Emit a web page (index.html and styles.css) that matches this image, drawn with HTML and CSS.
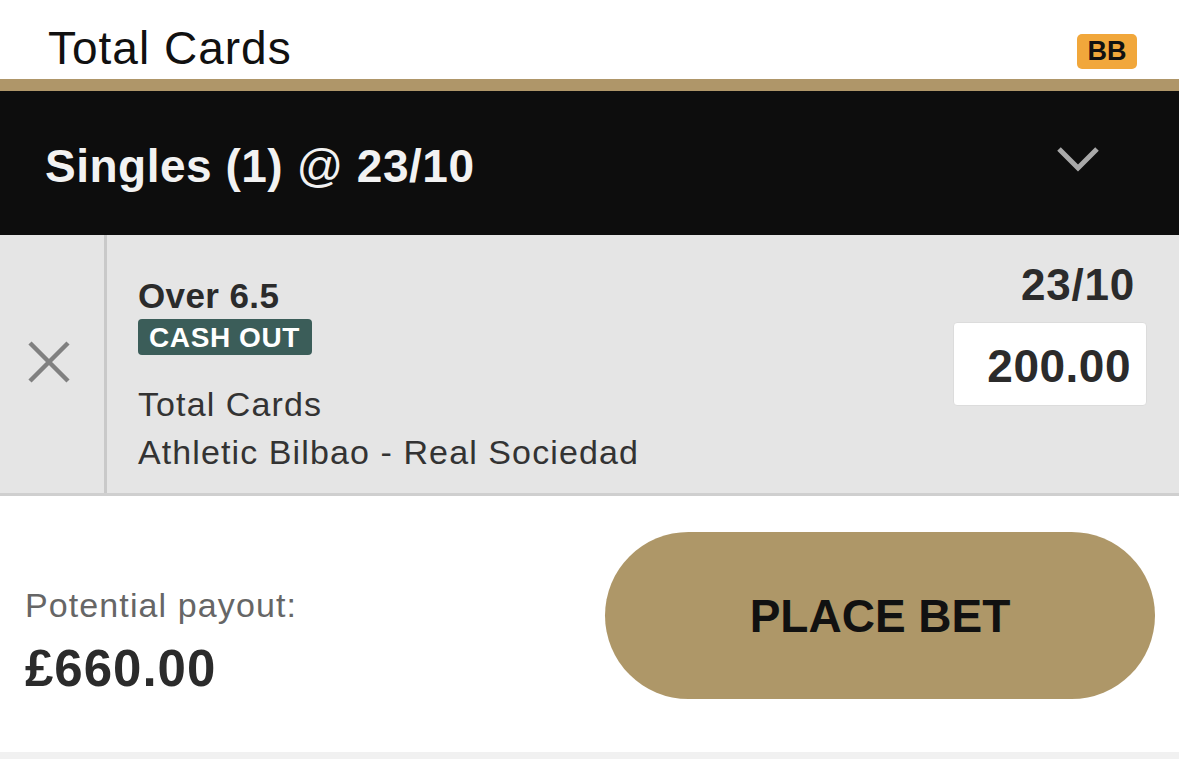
FILE: index.html
```html
<!DOCTYPE html>
<html>
<head>
<meta charset="utf-8">
<link rel="stylesheet" href="styles.css">
</head>
<body>
<div class="page">
  <header class="top">
    <div class="title">Total Cards</div>
    <div class="bb">BB</div>
  </header>
  <div class="goldbar"></div>
  <div class="singles">
    <div class="singles-title">Singles (1) <span class="at">@</span> 23/10</div>
    <svg class="chev" width="44" height="30" viewBox="0 0 44 30"><path d="M3 4 L22 23 L41 4" fill="none" stroke="#a9a9a9" stroke-width="5"/></svg>
  </div>
  <div class="selection">
    <div class="remove">
      <svg width="42" height="42" viewBox="0 0 42 42"><path d="M2 2 L40 40 M40 2 L2 40" stroke="#808080" stroke-width="4.5" fill="none"/></svg>
    </div>
    <div class="details">
      <div class="info">
        <div class="outcome">Over 6.5</div>
        <div class="cashout">CASH OUT</div>
        <div class="market">Total Cards</div>
        <div class="event">Athletic Bilbao - Real Sociedad</div>
      </div>
      <div class="stakecol">
        <div class="odds">23/10</div>
        <div class="stake">200.00</div>
      </div>
    </div>
  </div>
  <div class="footer">
    <div class="payout">
      <div class="payout-label">Potential payout:</div>
      <div class="payout-value">£660.00</div>
    </div>
    <button class="place">PLACE BET</button>
  </div>
  <div class="bottomstrip"></div>
</div>
</body>
</html>
```
FILE: styles.css
```css
* { box-sizing: border-box; }
html, body { margin: 0; padding: 0; background: #fff; }
body { font-family: "Liberation Sans", Arial, sans-serif; width: 1179px; height: 759px; overflow: hidden; }
.page { display: flex; flex-direction: column; height: 759px; }
.top { height: 79px; display: flex; align-items: flex-start; justify-content: space-between; padding: 0 42px 0 48px; }
.title { font-size: 46px; line-height: 46px; color: #111; margin-top: 25px; letter-spacing: 1px; }
.bb { background: #f1a73b; color: #111; font-weight: bold; font-size: 27px; width: 60px; height: 35px; border-radius: 5px; display: flex; align-items: center; justify-content: center; margin-top: 34px; }
.goldbar { height: 12px; background: #af9669; }
.singles { height: 144px; background: #0d0d0d; display: flex; align-items: flex-start; justify-content: space-between; padding: 0 79px 0 45px; }
.singles-title { color: #f2f2f2; font-weight: bold; font-size: 46px; line-height: 50px; letter-spacing: 0.5px; margin-top: 50px; }
.singles-title .at { font-weight: normal; }
.chev { margin-top: 54px; }
.selection { height: 261px; background: #e5e5e5; display: flex; border-bottom: 3px solid #cfcfcf; }
.remove { width: 107px; border-right: 3px solid #c9c9c9; display: flex; align-items: center; justify-content: center; padding-right: 6px; padding-bottom: 4px; }
.details { flex: 1; display: flex; justify-content: space-between; padding: 0 32px 0 31px; }
.info { display: flex; flex-direction: column; align-items: flex-start; padding-top: 42px; }
.outcome { font-weight: bold; font-size: 35px; color: #2b2b2b; line-height: 38px; letter-spacing: 0.4px; }
.cashout { background: #3b5d59; color: #fff; font-weight: bold; font-size: 28px; letter-spacing: 0.6px; border-radius: 4px; padding: 0 12px 0 11px; height: 36px; line-height: 37px; margin-top: 4px; }
.market { font-size: 34px; color: #333; margin-top: 25px; line-height: 48px; letter-spacing: 1.1px; }
.event { font-size: 34px; color: #333; line-height: 48px; letter-spacing: 1.1px; }
.stakecol { display: flex; flex-direction: column; align-items: flex-end; padding-top: 27px; }
.odds { font-weight: bold; font-size: 44px; color: #2b2b2b; margin-right: 12px; line-height: 46px; letter-spacing: 0.8px; }
.stake { margin-top: 14px; width: 194px; height: 84px; background: #fff; border: 1px solid #dcdcdc; border-radius: 4px; font-weight: bold; font-size: 46px; letter-spacing: 0.5px; color: #2b2b2b; display: flex; align-items: center; justify-content: flex-end; padding-right: 15px; padding-top: 4px; }
.footer { flex: 1; display: flex; align-items: flex-start; justify-content: space-between; padding: 0 24px 0 25px; }
.payout { padding-top: 89px; }
.payout-label { font-size: 34px; color: #666; line-height: 40px; letter-spacing: 1.1px; }
.payout-value { font-weight: bold; font-size: 51px; color: #2b2b2b; margin-top: 17px; line-height: 54px; letter-spacing: 1px; }
.place { margin-top: 36px; width: 550px; height: 167px; border: none; border-radius: 84px; background: #ae9768; color: #111; font-family: "Liberation Sans", Arial, sans-serif; font-weight: bold; font-size: 46px; padding: 0; }
.bottomstrip { height: 7px; background: #f1f1f1; }
```
